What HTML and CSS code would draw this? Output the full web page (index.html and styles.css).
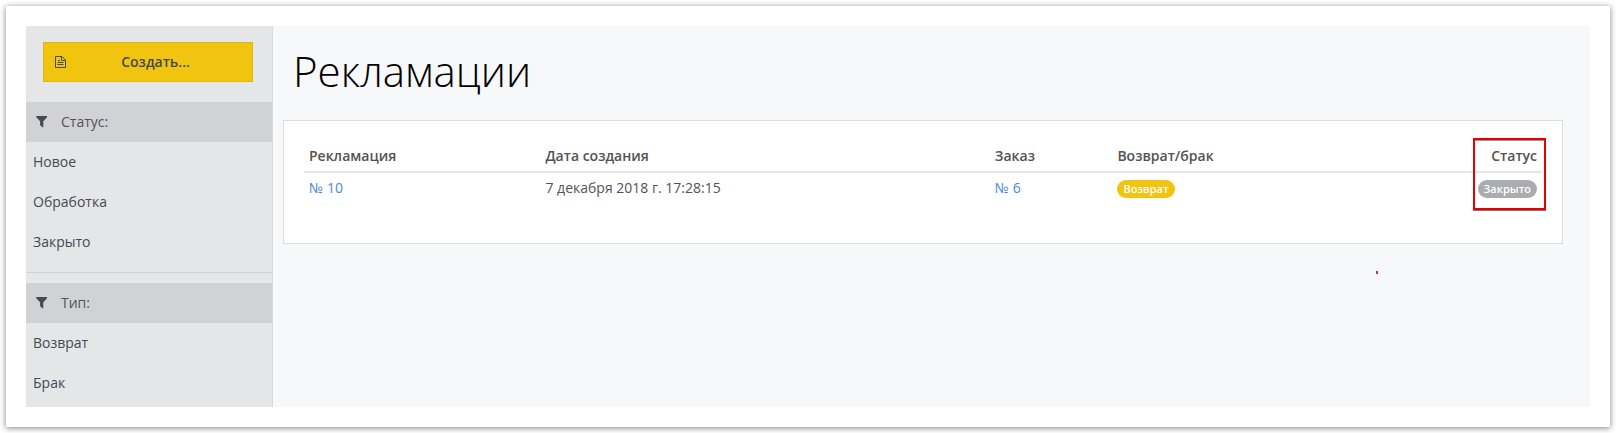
FILE: index.html
```html
<!DOCTYPE html>
<html lang="ru">
<head>
    <meta charset="UTF-8">
    <meta name="viewport" content="width=device-width, initial-scale=1.0">
    <title>Рекламации</title>
    <link rel="stylesheet" href="styles.css">
</head>
<body>
    <div class="app">
        <!-- Sidebar -->
        <aside class="sidebar">
            <button type="button" class="btn-create">
                <svg class="icon" viewBox="0 0 12 14" width="12" height="14" fill="none" stroke="currentColor" aria-hidden="true">
                    <path d="M.5 1.5H7L10.5 5v7.5H.5z M6.500 1.500v4h4 M2.500 7.500h6 M2.500 9.500h6 M3 5.500h2"/>
                </svg>
                <span>Создать...</span>
            </button>

            <nav class="filter">
                <h2 class="filter-title">
                    <svg class="icon" viewBox="0 0 12 12" width="12" height="12" fill="currentColor" aria-hidden="true">
                        <path d="M.5 0h10.3q.6.5.2 1.200L7.300 5.200V11q-.3.6-.8.3L4.100 9.300V5.200L.3 1.200Q0 .5.500 0z"/>
                    </svg>
                    Статус:
                </h2>
                <a href="#">Новое</a>
                <a href="#">Обработка</a>
                <a href="#">Закрыто</a>
            </nav>

            <nav class="filter">
                <h2 class="filter-title">
                    <svg class="icon" viewBox="0 0 12 12" width="12" height="12" fill="currentColor" aria-hidden="true">
                        <path d="M.5 0h10.3q.6.5.2 1.200L7.300 5.200V11q-.3.6-.8.3L4.100 9.300V5.200L.3 1.200Q0 .5.500 0z"/>
                    </svg>
                    Тип:
                </h2>
                <a href="#">Возврат</a>
                <a href="#">Брак</a>
            </nav>
        </aside>

        <!-- Content -->
        <main class="content">
            <h1>Рекламации</h1>
            <div class="card">
                <table class="claims">
                    <thead>
                        <tr>
                            <th class="col-claim">Рекламация</th>
                            <th class="col-date">Дата создания</th>
                            <th class="col-order">Заказ</th>
                            <th>Возврат/брак</th>
                            <th class="col-status">Статус</th>
                        </tr>
                    </thead>
                    <tbody>
                        <tr>
                            <td><a href="#">№ 10</a></td>
                            <td>7 декабря 2018 г. 17:28:15</td>
                            <td><a href="#">№ 6</a></td>
                            <td><span class="badge badge-return">Возврат</span></td>
                            <td class="col-status"><span class="badge badge-closed">Закрыто</span></td>
                        </tr>
                    </tbody>
                </table>
                <div class="highlight"></div>
                <div class="mark"></div>
            </div>
        </main>
    </div>
</body>
</html>
```

FILE: styles.css
```css
* {
    margin: 0;
    padding: 0;
    box-sizing: border-box;
}
body {
    margin: 6px;
    padding: 20px;
    background: #fff;
    box-shadow: 0 1px 6px rgba(0, 0, 0, 0.5);
    font-family: "Open Sans", "Noto Sans", sans-serif;
    font-size: 14px;
    line-height: 20px;
    color: #535353;
}
a {
    color: #4a89dc;
    text-decoration: none;
}
.app {
    display: flex;
    background: #f6f8fa;
}

/* Sidebar */
.sidebar {
    flex: 0 0 247px;
    padding: 16px 0 4px;
    background: #e5e6e8;
    border-right: 1px solid #d9dadc;
}
.btn-create {
    display: flex;
    align-items: center;
    width: 210px;
    height: 40px;
    margin: 0 17px 20px;
    padding: 0 8px 0 11px;
    background: #f1c40f;
    border: 1px solid #e0b50c;
    color: #434a54;
    font: inherit;
    font-weight: 600;
    cursor: pointer;
}
.btn-create span {
    flex: 1;
    text-align: center;
}
.filter + .filter {
    margin-top: 10px;
    padding-top: 10px;
    border-top: 1px solid #d1d2d6;
}
.filter-title {
    display: flex;
    align-items: center;
    gap: 13px;
    padding: 10px;
    background: #d1d2d6;
    font-size: 14px;
    font-weight: 400;
}
.filter-title .icon {
    color: #434a54;
}
.filter a {
    display: block;
    padding: 10px 7px;
    color: #434a54;
}

/* Content */
.content {
    flex: 1;
    padding: 0 27px 0 10px;
}
h1 {
    padding: 15px 10px 19px;
    font-size: 42px;
    font-weight: 300;
    line-height: 60px;
    color: #000;
}
.card {
    position: relative;
    padding: 20px;
    background: #fff;
    border: 1px solid #dadcde;
}
.claims {
    width: 100%;
    margin-bottom: 20px;
    border-collapse: separate;
    border-spacing: 0;
    table-layout: fixed;
}
.claims th,
.claims td {
    padding: 5px;
    text-align: left;
}
.claims th {
    border-bottom: 2px solid #e5e6e8;
    font-weight: 600;
}
.claims .col-claim {
    width: 19.1%;
}
.claims .col-date {
    width: 36.3%;
}
.claims .col-order {
    width: 9.9%;
}
.claims .col-status {
    text-align: right;
}
.badge {
    display: inline-block;
    padding: 0 6px;
    border-radius: 9px;
    font-size: 11px;
    font-weight: 600;
    line-height: 18px;
    color: #fff;
    vertical-align: top;
    margin-top: 2px;
}
.badge-return {
    background: #f1c40f;
}
.badge-closed {
    background: #aaacaf;
}

/* Annotations over the table */
.highlight {
    position: absolute;
    top: 17px;
    right: 16px;
    width: 73px;
    height: 72px;
    border: 2px solid #e60000;
    box-shadow: 0 1px 0 #777, inset 0 1px 0 #999;
}
.mark {
    position: absolute;
    top: 150px;
    right: 184px;
    width: 2px;
    height: 3px;
    background: #d03040;
}
```
